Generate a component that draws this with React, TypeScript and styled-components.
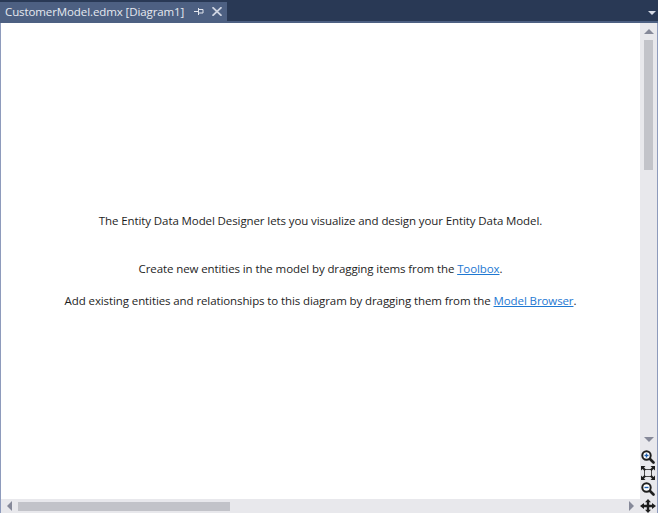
import React from "react";
import styled, { createGlobalStyle } from "styled-components";

const GlobalStyle = createGlobalStyle`
  html, body {
    margin: 0;
    padding: 0;
    height: 100%;
    overflow: hidden;
    background: #293955;
  }
`;

const Window = styled.div`
  width: 658px;
  height: 513px;
  display: flex;
  flex-direction: column;
  font-family: "Open Sans", "Noto Sans", sans-serif;
  background: #293955;
`;

const TabWell = styled.div`
  height: 19px;
  display: flex;
  justify-content: space-between;
  align-items: stretch;
  background: #293955;
  padding-top: 2px;
`;

const Tab = styled.div`
  width: 227px;
  display: flex;
  align-items: center;
  background: #4d6082;
  color: #e6e9f0;
  font-size: 11.5px;
  letter-spacing: -0.1px;
  padding-left: 5px;
  box-sizing: border-box;
  white-space: nowrap;
`;

const TabTitle = styled.span`
  flex: 0 0 189px;
`;

const TabButton = styled.span`
  flex: 0 0 auto;
  height: 10px;
  display: flex;
  align-items: center;
  margin-right: 8px;

  &:last-child {
    margin-right: 0;
  }
`;

const DropArrow = styled.div`
  width: 0;
  height: 0;
  margin: 9px 2px 0 0;
  border-left: 4px solid transparent;
  border-right: 4px solid transparent;
  border-top: 4px solid #d5dae5;
`;

const Accent = styled.div`
  height: 2px;
  background: #4d6082;
`;

const Body = styled.div`
  flex: 1;
  min-height: 0;
  display: grid;
  grid-template-columns: 1fr 17px;
  grid-template-rows: 1fr 14px;
  background: #e8e8ec;
  border-right: 1px solid #8e9bbc;
`;

const Canvas = styled.div`
  background: #ffffff;
  border-left: 1px solid #8e9bbc;
  display: flex;
  flex-direction: column;
  align-items: center;
  padding-top: 190px;
  color: #1e1e1e;
  font-size: 11.5px;
  letter-spacing: -0.1px;
  line-height: 16px;
`;

const Headline = styled.p`
  margin: 0 0 32px;
`;

const Hint = styled.p`
  margin: 0 0 16px;
`;

const DocLink = styled.a`
  color: #1e78d2;
  text-decoration: underline;
`;

const VerticalBar = styled.div`
  display: flex;
  flex-direction: column;
  align-items: center;
  background: #e8e8ec;
`;

const ScrollArrowUp = styled.div`
  width: 0;
  height: 0;
  margin-top: 6px;
  border-left: 5px solid transparent;
  border-right: 5px solid transparent;
  border-bottom: 5px solid #868999;
`;

const ScrollArrowDown = styled.div`
  width: 0;
  height: 0;
  margin-bottom: 8px;
  border-left: 5px solid transparent;
  border-right: 5px solid transparent;
  border-top: 5px solid #868999;
`;

const VerticalThumb = styled.div`
  width: 9px;
  height: 130px;
  margin-top: 6px;
  background: #c2c3c9;
`;

const Spacer = styled.div`
  flex: 1;
`;

const ZoomTools = styled.div`
  display: flex;
  flex-direction: column;
  align-items: center;
  gap: 2px;
  margin-bottom: 3px;
  padding-right: 1px;
`;

const HorizontalBar = styled.div`
  display: flex;
  align-items: center;
  background: #e8e8ec;
  border-left: 1px solid #8e9bbc;
`;

const ScrollArrowLeft = styled.div`
  width: 0;
  height: 0;
  margin-left: 6px;
  border-top: 5px solid transparent;
  border-bottom: 5px solid transparent;
  border-right: 5px solid #868999;
`;

const ScrollArrowRight = styled.div`
  width: 0;
  height: 0;
  margin-right: 6px;
  border-top: 5px solid transparent;
  border-bottom: 5px solid transparent;
  border-left: 5px solid #868999;
`;

const HorizontalThumb = styled.div`
  width: 212px;
  height: 9px;
  margin-left: 6px;
  background: #c2c3c9;
`;

const Corner = styled.div`
  display: flex;
  align-items: center;
  justify-content: center;
  padding-right: 1px;
  background: #e8e8ec;
`;

const PinIcon: React.FC = () => (
  <svg width="10" height="7" viewBox="0 0 10 7" fill="none" stroke="#e3e6ee">
    <path d="M0 3.5h4M4.500 0v7M4.500 1.500h4.500v3.500H4.500" />
  </svg>
);

const CloseIcon: React.FC = () => (
  <svg width="10" height="9" viewBox="0 0 10 9" fill="none" stroke="#cfd5e2" strokeWidth="1.7">
    <path d="M0.500 0.200L9.500 8.800M9.500 0.200L0.500 8.800" />
  </svg>
);

const ZoomIcon: React.FC<{ plus?: boolean }> = ({ plus }) => (
  <svg width="14" height="14" viewBox="0 0 14 14">
    <path d="M8 8l4.500 4.500" stroke="#1e1e1e" strokeWidth="2.600" strokeLinecap="round" />
    <circle cx="5.500" cy="5.500" r="4.200" fill="#fff" stroke="#1e1e1e" strokeWidth="2" />
    <path d="M3.500 5.500h4" stroke="#1c5fb0" strokeWidth="1.400" />
    {plus && <path d="M5.500 3.500v4" stroke="#1c5fb0" strokeWidth="1.400" />}
  </svg>
);

const FitIcon: React.FC = () => (
  <svg width="14" height="14" viewBox="0 0 14 14" fill="none">
    <rect x="3.500" y="3.500" width="7" height="7" stroke="#4a4a4a" />
    <path d="M0 0h4.500L3 1.500 5 3.500 3.500 5 1.500 3 0 4.500zM14 0H9.500L11 1.500 9 3.500 10.500 5 12.500 3 14 4.500zM0 14h4.500L3 12.500l2-2L3.500 9l-2 2L0 9.500zM14 14H9.500l1.500-1.500-2-2L10.500 9l2 2L14 9.500z" fill="#1e1e1e" />
  </svg>
);

const MoveIcon: React.FC = () => (
  <svg width="16" height="14" viewBox="0 0 16 14">
    <path d="M8 0l3 3.200H9.200V5.700H12V4l4 3-4 3V8.300H9.200V10.800H11L8 14l-3-3.200h1.800V8.300H4V10L0 7l4-3v1.700h2.800V3.200H5z" fill="#1e1e1e" />
  </svg>
);

const App: React.FC = () => (
  <Window>
    <GlobalStyle />
    <TabWell>
      <Tab>
        <TabTitle>CustomerModel.edmx [Diagram1]</TabTitle>
        <TabButton>
          <PinIcon />
        </TabButton>
        <TabButton>
          <CloseIcon />
        </TabButton>
      </Tab>
      <DropArrow />
    </TabWell>
    <Accent />
    <Body>
      <Canvas>
        <Headline>The Entity Data Model Designer lets you visualize and design your Entity Data Model.</Headline>
        <Hint>
          Create new entities in the model by dragging items from the <DocLink>Toolbox</DocLink>.
        </Hint>
        <Hint>
          Add existing entities and relationships to this diagram by dragging them from the{" "}
          <DocLink>Model Browser</DocLink>.
        </Hint>
      </Canvas>
      <VerticalBar>
        <ScrollArrowUp />
        <VerticalThumb />
        <Spacer />
        <ScrollArrowDown />
        <ZoomTools>
          <ZoomIcon plus />
          <FitIcon />
          <ZoomIcon />
        </ZoomTools>
      </VerticalBar>
      <HorizontalBar>
        <ScrollArrowLeft />
        <HorizontalThumb />
        <Spacer />
        <ScrollArrowRight />
      </HorizontalBar>
      <Corner>
        <MoveIcon />
      </Corner>
    </Body>
  </Window>
);

export default App;
